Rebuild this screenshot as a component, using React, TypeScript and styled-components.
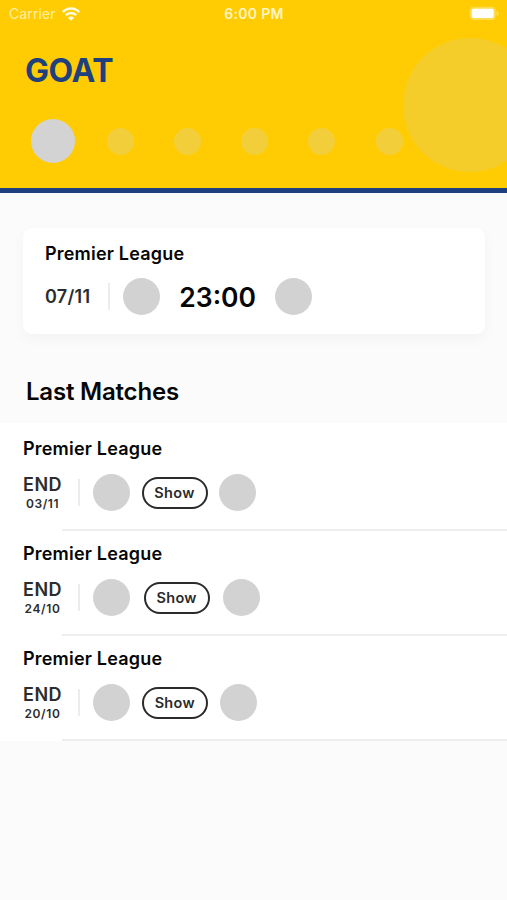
import React from "react";
import styled, { createGlobalStyle } from "styled-components";

const GlobalStyle = createGlobalStyle`
  *, *::before, *::after { box-sizing: border-box; }
  body {
    margin: 0;
    background: #fbfbfb;
    font-family: Inter, "Liberation Sans", sans-serif;
    color: #060606;
  }
`;

const Screen = styled.div`
  width: 100%;
  height: 900px;
  overflow: hidden;
  background: #fbfbfb;
`;

const Header = styled.header`
  position: relative;
  height: 193px;
  overflow: hidden;
  background: #ffcc03;
  border-bottom: 5px solid #1f407f;
`;

const HeaderCrest = styled.div`
  position: absolute;
  top: 38px;
  left: 403px;
  width: 134px;
  height: 134px;
  border-radius: 50%;
  background: #f4cd2b;
`;

const StatusBar = styled.div`
  display: grid;
  grid-template-columns: 1fr auto 1fr;
  align-items: center;
  height: 27px;
  padding: 0 8px 0 9px;
  color: #fff5c4;
  font-size: 14px;
  line-height: 27px;
`;

const Carrier = styled.div`
  display: flex;
  align-items: center;
  gap: 6px;
  color: #ffefa0;
  letter-spacing: 0.1px;
`;

const Clock = styled.div`
  font-weight: 600;
  font-size: 14px;
  letter-spacing: 0.3px;
`;

const BatterySlot = styled.div`
  display: flex;
  justify-content: flex-end;
`;

const Title = styled.h1`
  margin: 24px 0 0 25px;
  color: #1f407f;
  font-size: 32px;
  font-weight: 700;
  line-height: 40px;
  letter-spacing: -0.4px;
`;

const TeamPicker = styled.div`
  display: flex;
  padding: 28px 0 0 19.5px;
`;

const TeamSlot = styled.div`
  display: flex;
  flex: none;
  align-items: center;
  justify-content: center;
  width: 67.2px;
  height: 44px;
`;

const TeamDot = styled.div<{ $active: boolean }>`
  width: ${(p) => (p.$active ? 44 : 27)}px;
  height: ${(p) => (p.$active ? 44 : 27)}px;
  border-radius: 50%;
  background: ${(p) => (p.$active ? "#d3d3d3" : "#f2ce3b")};
`;

const NextMatch = styled.section`
  height: 106px;
  margin: 35px 22px 0 23px;
  padding: 14px 22px;
  border-radius: 9px;
  background: #fff;
  box-shadow: 0 5px 14px rgba(0, 0, 0, 0.035);
`;

const League = styled.div`
  font-size: 18px;
  font-weight: 600;
  line-height: 22px;
  letter-spacing: 0.2px;
`;

const NextLeague = styled(League)`
  padding-top: 1px;
  line-height: 21px;
`;

const MatchLine = styled.div`
  display: flex;
  align-items: center;
  height: 37px;
  margin-top: 14px;
`;

const DateText = styled.div`
  width: 63px;
  color: #2b2b2b;
  font-size: 18px;
  font-weight: 600;
  letter-spacing: 0.3px;
`;

const Divider = styled.div`
  flex: none;
  width: 2px;
  height: 27px;
  margin-right: 13px;
  background: #ececec;
`;

const Crest = styled.div`
  flex: none;
  width: 37px;
  height: 37px;
  border-radius: 50%;
  background: #d2d2d2;
`;

const Kickoff = styled.div`
  width: 115.4px;
  padding-top: 1px;
  text-align: center;
  font-size: 26.5px;
  font-weight: 600;
`;

const SectionTitle = styled.h2`
  margin: 43px 0 0 26px;
  font-size: 24px;
  font-weight: 600;
  line-height: 30px;
  letter-spacing: -0.2px;
`;

const MatchList = styled.div`
  margin-top: 16px;
  padding-bottom: 3px;
  background: #fff;
`;

const MatchRow = styled.article`
  height: 105px;
  padding: 15px 0 0 23px;
`;

const Status = styled.div`
  width: 39px;
  margin-right: 16px;
  padding-top: 1px;
  text-align: center;
  color: #2d2d2d;
`;

const StatusLabel = styled.div`
  font-size: 18px;
  font-weight: 600;
  line-height: 20px;
  letter-spacing: 0.4px;
  white-space: nowrap;
`;

const StatusDate = styled.div`
  font-size: 12px;
  font-weight: 600;
  line-height: 17px;
  letter-spacing: 0.6px;
`;

const ShowButton = styled.button<{ $inset: number }>`
  flex: none;
  width: 66px;
  height: 32px;
  margin: 0 ${(p) => p.$inset}px;
  padding: 0;
  border: 2px solid #2b2b2b;
  border-radius: 16px;
  background: #fff;
  color: #2b2b2b;
  font-family: inherit;
  font-size: 14.5px;
  font-weight: 600;
  line-height: 28px;
  letter-spacing: 0.3px;
`;

const Rule = styled.div`
  height: 2px;
  margin: 18px 0 0 39px;
  background: #eeeeee;
`;

const WifiIcon = () => (
  <svg width="18" height="14" viewBox="0 0 18 14" fill="none" stroke="#fffbe2" strokeWidth="2.4">
    <path d="M.8 5.1C5.4.3 12.6.3 17.2 5.1" />
    <path d="M3.8 8.2c3-2.9 7.4-2.9 10.4 0" />
    <path d="M5.9 10.7c1.8-1.7 4.4-1.7 6.2 0L9 13.7z" fill="#fffbe2" stroke="none" />
  </svg>
);

const BatteryIcon = () => (
  <svg width="30" height="15" viewBox="0 0 30 15">
    <rect x="0.7" y="0.7" width="26" height="13.4" rx="4" fill="#ffdc4b" />
    <rect x="2.7" y="2.8" width="22" height="9.2" rx="2" fill="#fff" />
    <path d="M27.5 5q2.2.7 2.2 2.5t-2.2 2.5z" fill="#ffdf5d" />
  </svg>
);

const teams = [true, false, false, false, false, false];

const matches = [
  { date: "03/11", inset: 11.5 },
  { date: "24/10", inset: 13.7 },
  { date: "20/10", inset: 11.8 },
];

export default function App() {
  return (
    <Screen>
      <GlobalStyle />
      <Header>
        <HeaderCrest />
        <StatusBar>
          <Carrier>
            <span>Carrier</span>
            <WifiIcon />
          </Carrier>
          <Clock>6:00 PM</Clock>
          <BatterySlot>
            <BatteryIcon />
          </BatterySlot>
        </StatusBar>
        <Title>GOAT</Title>
        <TeamPicker>
          {teams.map((active, i) => (
            <TeamSlot key={i}>
              <TeamDot $active={active} />
            </TeamSlot>
          ))}
        </TeamPicker>
      </Header>
      <NextMatch>
        <NextLeague>Premier League</NextLeague>
        <MatchLine>
          <DateText>07/11</DateText>
          <Divider />
          <Crest />
          <Kickoff>23:00</Kickoff>
          <Crest />
        </MatchLine>
      </NextMatch>
      <SectionTitle>Last Matches</SectionTitle>
      <MatchList>
        {matches.map((match) => (
          <MatchRow key={match.date}>
            <League>Premier League</League>
            <MatchLine>
              <Status>
                <StatusLabel>END</StatusLabel>
                <StatusDate>{match.date}</StatusDate>
              </Status>
              <Divider />
              <Crest />
              <ShowButton $inset={match.inset}>Show</ShowButton>
              <Crest />
            </MatchLine>
            <Rule />
          </MatchRow>
        ))}
      </MatchList>
    </Screen>
  );
}
